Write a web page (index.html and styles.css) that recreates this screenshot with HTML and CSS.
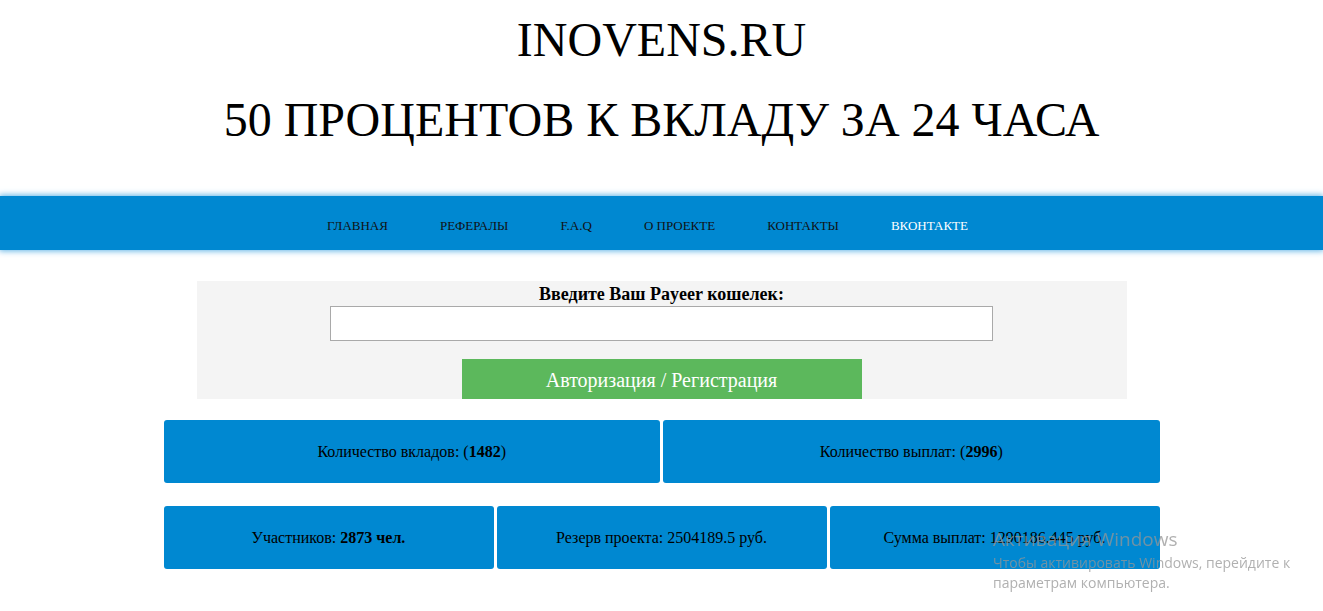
FILE: index.html
```html
<!DOCTYPE html>
<html lang="ru">
<head>
    <meta charset="UTF-8">
    <meta name="viewport" content="width=device-width, initial-scale=1.0">
    <title>INOVENS.RU</title>
    <link rel="stylesheet" href="styles.css">
</head>
<body>
    <header class="header">
        <h1>INOVENS.RU</h1>
        <h2>50 ПРОЦЕНТОВ К ВКЛАДУ ЗА 24 ЧАСА</h2>
    </header>

    <nav class="menu">
        <a href="#">Главная</a>
        <a href="#">Рефералы</a>
        <a href="#">F.A.Q</a>
        <a href="#">О проекте</a>
        <a href="#">Контакты</a>
        <a href="#" class="vk">ВКонтакте</a>
    </nav>

    <form class="login">
        <label for="wallet">Введите Ваш Payeer кошелек:</label>
        <input type="text" id="wallet" name="wallet">
        <button type="submit">Авторизация / Регистрация</button>
    </form>

    <div class="stats two">
        <div class="stat"><span>Количество вкладов: (<b>1482</b>)</span></div>
        <div class="stat"><span>Количество выплат: (<b>2996</b>)</span></div>
    </div>

    <div class="stats three">
        <div class="stat"><span>Участников: <b>2873 чел.</b></span></div>
        <div class="stat"><span>Резерв проекта: 2504189.5 руб.</span></div>
        <div class="stat"><span>Сумма выплат: 1290186.445 руб.</span></div>
    </div>

    <div class="activate">
        <div class="activate-title">Активация Windows</div>
        <div>Чтобы активировать Windows, перейдите к<br>параметрам компьютера.</div>
    </div>
</body>
</html>
```

FILE: styles.css
```css
body {
    margin: 0;
    font-family: "Liberation Serif", "Times New Roman", serif;
    color: #000;
    background: #fff;
}

.header {
    text-align: center;
    padding-top: 12px;
    height: 184px;
}

.header h1 {
    margin: 0;
    font-size: 48px;
    font-weight: normal;
    line-height: 56px;
}

.header h2 {
    margin: 24px 0 0;
    font-size: 48px;
    font-weight: normal;
    line-height: 56px;
}

.menu {
    background: #0088d1;
    height: 54px;
    display: flex;
    justify-content: center;
    align-items: center;
    gap: 52px;
    padding-right: 28px;
    box-shadow: 0 0 6px 1px #5fb3e6;
}

.menu a {
    color: #111;
    text-decoration: none;
    text-transform: uppercase;
    font-size: 13px;
    line-height: 15px;
    padding-top: 5px;
}

.menu a.vk {
    color: #fff;
}

.login {
    width: 930px;
    margin: 31px auto 0;
    background: #f4f4f4;
    display: flex;
    flex-direction: column;
    align-items: center;
    padding-top: 3px;
}

.login label {
    font-weight: bold;
    font-size: 18px;
    line-height: 21px;
    margin-bottom: 1px;
}

.login input {
    box-sizing: border-box;
    width: 663px;
    height: 35px;
    border: 1px solid #a9a9a9;
    background: #fff;
    margin: 0;
}

.login button {
    margin-top: 18px;
    width: 400px;
    height: 40px;
    border: none;
    background: #5cb85c;
    color: #fff;
    font-family: inherit;
    font-size: 20px;
    padding-top: 3px;
    cursor: pointer;
}

.stats {
    width: 996px;
    margin: 21px auto 0;
    display: grid;
    gap: 3px;
}

.stats.two {
    grid-template-columns: 1fr 1fr;
}

.stats.three {
    margin-top: 23px;
    grid-template-columns: 1fr 1fr 1fr;
}

.stat {
    background: #0088d1;
    border-radius: 3px;
    height: 63px;
    display: flex;
    align-items: center;
    justify-content: center;
    font-size: 16px;
}

.activate {
    position: fixed;
    left: 993px;
    top: 527px;
    font-family: "Open Sans", "Noto Sans", sans-serif;
    color: rgba(150, 150, 150, 0.75);
    font-size: 14px;
    line-height: 20px;
}

.activate-title {
    font-size: 19px;
    line-height: 25px;
    margin-bottom: 1px;
}
```
